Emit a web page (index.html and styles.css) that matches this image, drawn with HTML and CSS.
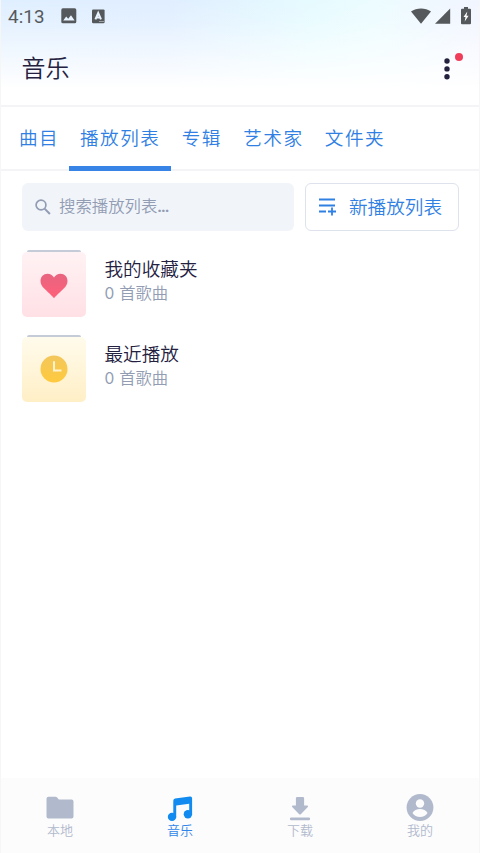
FILE: index.html
```html
<!DOCTYPE html>
<html lang="zh-CN">
<head>
<meta charset="utf-8">
<meta name="viewport" content="width=device-width, initial-scale=1">
<title>音乐</title>
<link rel="stylesheet" href="styles.css">
</head>
<body>
<div class="app">
  <header class="top">
    <div class="status">
      <span class="time">4:13</span>
      <svg class="st-img" width="16" height="16" viewBox="0 0 16 16"><rect x=".3" y=".3" width="15" height="15" rx="1.6" fill="#55595c"/><path d="M2.200 12.400 5.200 8.600l2 2.200 2.800-3.500 3.600 5.100z" fill="#eaf4ff"/></svg>
      <svg class="st-a" width="13" height="15" viewBox="0 0 13 15"><rect x="0" y=".4" width="12.600" height="13.800" rx="1.200" fill="#55595c"/><path d="M3.400 10.300 6.200 4 9 10.300M4.600 8.400h3.200" fill="none" stroke="#eaf4ff" stroke-width="2"/><path d="M7 12.500h5" stroke="#9aa2a8"/></svg>
      <span class="grow"></span>
      <svg width="20" height="16" viewBox="0 0 20 16"><path d="M10 15.800 0 3.400C5.600-.6 14.400-.6 20 3.400z" fill="#55595c"/></svg>
      <svg class="st-sig" width="16" height="16" viewBox="0 0 16 16"><path d="M15.200.5v15.300H0z" fill="#55595c"/></svg>
      <svg class="st-bat" width="10" height="18" viewBox="0 0 10 18"><path d="M3 0h4v1.800h2q1 0 1 1v13.400q0 1-1 1H1q-1 0-1-1V2.800q0-1 1-1h2z" fill="#55595c"/><path d="M6.300 4.500 2.500 10h2l-.8 4.500L7.600 8.800H5.500z" fill="#fff"/></svg>
    </div>
    <div class="titlebar">
      <h1>音乐</h1>
      <div class="more">
        <svg width="6" height="22" viewBox="0 0 6 22"><g fill="#24213f"><circle cx="3" cy="3" r="2.700"/><circle cx="3" cy="10.900" r="2.700"/><circle cx="3" cy="18.800" r="2.700"/></g></svg>
        <i class="dot"></i>
      </div>
    </div>
  </header>
  <nav class="tabs">
    <a>曲目</a><a class="on">播放列表</a><a>专辑</a><a>艺术家</a><a>文件夹</a>
  </nav>
  <div class="tools">
    <div class="search">
      <svg width="16" height="16" viewBox="0 0 16 16" fill="none" stroke="#929cb3"><circle cx="6" cy="6" r="4.900" stroke-width="1.700"/><path d="m9.600 9.600 5.300 5.400" stroke-width="2"/></svg>
      <span>搜索播放列表<em>...</em></span>
    </div>
    <div class="new">
      <svg width="18" height="18" viewBox="0 0 18 18" fill="none" stroke="#3080e4" stroke-width="1.800"><path d="M0 1.500h16M0 7.500h16M0 13.500h7M9 13.500h8M13 9.500v8"/></svg>
      <span>新播放列表</span>
    </div>
  </div>
  <main class="list">
    <div class="item">
      <div class="cover">
        <div class="art pink"><svg width="28" height="26" viewBox="0 0 28 26"><defs><linearGradient id="h" x2="0" y2="1"><stop stop-color="#e86480"/><stop offset="1" stop-color="#ff6079"/></linearGradient></defs><path d="M14 25.300C12.500 23.300 10.500 21.600 4.500 15.800 1.800 13.200.5 11 .5 8 .5 3.800 3.600.8 7.400.8c2.800 0 5.200 1.400 6.600 3.700C15.400 2.200 17.800.8 20.600.8c3.800 0 6.900 3 6.900 7.200 0 3-1.300 5.200-4 7.800-6 5.800-8 7.500-9.500 9.500z" fill="url(#h)"/></svg></div>
      </div>
      <div class="text"><h2>我的收藏夹</h2><p><b>0</b>首歌曲</p></div>
    </div>
    <div class="item">
      <div class="cover">
        <div class="art gold"><svg width="28" height="28" viewBox="0 0 28 28"><defs><linearGradient id="c" x2="0" y2="1"><stop stop-color="#f2c75b"/><stop offset="1" stop-color="#ffca3e"/></linearGradient></defs><circle cx="14" cy="14" r="13.500" fill="url(#c)"/><path d="M14 6.200v9.200h7.500" fill="none" stroke="#fff3cf" stroke-width="2"/></svg></div>
      </div>
      <div class="text"><h2>最近播放</h2><p><b>0</b>首歌曲</p></div>
    </div>
  </main>
  <footer class="bottom">
    <a><svg width="28" height="28" viewBox="0 0 28 28"><path d="M2.500 2.800h7q1 0 1.600.8l1.700 2h12.700q2 0 2 2v14.800q0 2-2 2h-23q-2 0-2-2V4.800q0-2 2-2z" fill="#b1b9cc"/></svg><span>本地</span></a>
    <a class="on"><svg width="28" height="28" viewBox="0 0 28 28"><path d="M7.300 6.800Q7.300 5.100 9.100 4.600L24 2.600q2.100-.2 2.100 1.700V20h-2.900V9.800L10.200 11.600V23.500H7.300z" fill="#118bf0"/><circle cx="6" cy="22.900" r="4.200" fill="#118bf0"/><circle cx="21.900" cy="20.200" r="4.200" fill="#118bf0"/></svg><span>音乐</span></a>
    <a><svg width="28" height="28" viewBox="0 0 28 28" fill="#b1b9cc"><path d="M11.200 3h5.600q1.300 0 1.300 1.300V11.500h3q1.800.1.700 1.400l-7 7.300q-.8.800-1.600 0l-7-7.300Q5.100 11.600 6.900 11.500h3V4.300Q9.900 3 11.200 3z"/><rect x="4" y="23.600" width="20" height="2.700" rx="1"/></svg><span>下载</span></a>
    <a><svg width="28" height="28" viewBox="0 0 28 28"><circle cx="14" cy="13.500" r="13.400" fill="#b1b9cc"/><g fill="#fcfcfd"><circle cx="14" cy="9.500" r="4.200"/><path d="M6.500 19c2.500-5.500 12.500-5.500 15 0-3 5.300-12 5.300-15 0z"/></g></svg><span>我的</span></a>
  </footer>
</div>
</body>
</html>
```
FILE: styles.css
```css
* { box-sizing: border-box; }
body {
  margin: 0;
  background: #fff;
  font-family: Roboto, "Noto Sans CJK SC", sans-serif;
  font-weight: 350;
  color: #24213f;
}
svg { display: block; flex: none; }
h1, h2, p { margin: 0; font-weight: inherit; }
.app {
  width: 480px;
  height: 853px;
  display: flex;
  flex-direction: column;
  border-left: 1px solid #f6f6f6;
  border-right: 1px solid #f6f6f6;
  overflow: hidden;
}
.top {
  height: 107px;
  border-bottom: 2px solid #f4f4f6;
  background:
    linear-gradient(rgba(255,255,255,0), rgba(255,255,255,.15) 20%, #fff 85%),
    linear-gradient(90deg, #e0efff 0%, #e0eeff 35%, #e6fbff 65%, #ecfcff 78%, #f2f5ff 100%);
}
.status {
  height: 32px;
  display: flex;
  align-items: center;
  padding: 0 8px 0 7px;
}
.time { font-size: 18.800px; line-height: 32px; padding-top: 1px; font-weight: 400; color: #55595c; letter-spacing: .1px; width: 53px; }
.st-a { margin-left: 15px; }
.grow { flex: 1; }
.st-sig { margin: 0 10px 0 4px; }
.titlebar {
  height: 73px;
  display: flex;
  justify-content: space-between;
  padding: 19px 29px 0 20.500px;
}
h1 { font-size: 24px; line-height: 36px; }
.more { position: relative; padding-top: 7px; height: 36px; }
.dot {
  position: absolute;
  left: 11px;
  top: 2px;
  width: 8px;
  height: 8px;
  border-radius: 50%;
  background: #f03e5a;
}
.tabs {
  height: 64px;
  display: flex;
  padding-left: 7px;
  border-bottom: 2px solid #f4f4f6;
}
.tabs a {
  height: 64px;
  padding: 0 10.300px 0 11px;
  font-size: 18.600px;
  letter-spacing: 1.500px;
  line-height: 64px;
  color: #3080e4;
}
.tabs a:first-child { padding-right: 9.800px; }
.tabs .on { border-bottom: 5px solid #3783e6; }
.tools {
  display: flex;
  gap: 11px;
  padding: 12px 20.500px 0 20.500px;
}
.search, .new {
  height: 48px;
  display: flex;
  align-items: center;
  border-radius: 6px;
}
.search span, .new span { margin-top: -4px; }
.search {
  width: 272px;
  padding-left: 13.500px;
  gap: 8px;
  background: #f1f5fa;
  color: #929cb3;
  font-size: 16.400px;
}
.search em { font-style: normal; font-weight: 700; letter-spacing: -1px; }
.new {
  flex: 1;
  padding-left: 13px;
  gap: 12.500px;
  border: 1px solid #dde2ec;
  color: #3080e4;
  font-size: 18.600px;
}
.list {
  flex: 1;
  padding: 19px 20.500px;
  display: flex;
  flex-direction: column;
  gap: 18.500px;
}
.item { display: flex; gap: 19px; }
.cover {
  width: 64px;
  height: 66.500px;
}
.cover::before {
  content: "";
  display: block;
  height: 2px;
  margin: 0 5px;
  border-radius: 2px 2px 0 0;
  background: #c5cbd7;
}
.art {
  height: 64.500px;
  display: flex;
  align-items: center;
  justify-content: center;
  border-radius: 5px;
}
.art svg { margin-top: 3px; }
.gold svg { margin-top: 0; }
.pink { background: linear-gradient(#fff2f4, #ffe0e5); }
.gold { background: linear-gradient(#fffbec, #ffefc6); }
h2 { font-size: 18.600px; line-height: 26px; margin-top: 7px; }
.list p { font-size: 16.300px; line-height: 22px; color: #929cb3; }
.list b { font-family: Inter, sans-serif; font-weight: 400; font-size: 15.500px; margin-right: 5px; }
.bottom {
  height: 75px;
  display: grid;
  grid-template-columns: repeat(4, 1fr);
  background: #fcfcfd;
  margin: 0 -1px;
}
.bottom a {
  display: flex;
  flex-direction: column;
  align-items: center;
  padding-top: 16px;
  font-size: 13px;
  line-height: 17px;
  color: #b1b9cc;
}
.bottom .on { color: #2f86ea; }
```
